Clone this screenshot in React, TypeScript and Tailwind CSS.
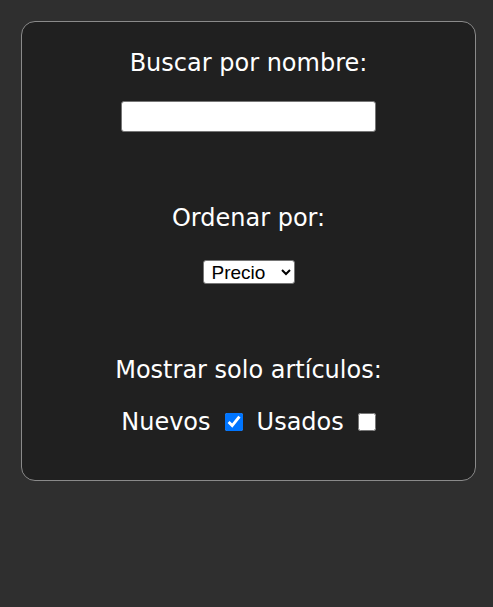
export default function App() {
  return (
    <div className="min-h-[607px] bg-[#2f2f2f] pt-[21px] pl-[21px] pr-[17px] font-['DejaVu_Sans',Verdana,sans-serif] text-white">
      <div className="flex flex-col items-center rounded-[14px] border border-[#8a8a8a] bg-[#202020] pt-[27px] pb-[44px]">
        <label className="text-[24px] leading-[28px]">Buscar por nombre:</label>
        <input
          type="text"
          className="mt-[24px] h-[31px] w-[255px] rounded-[3px] border border-[#767676] bg-white text-black"
        />

        <label className="mt-[72px] text-[24px] leading-[28px]">Ordenar por:</label>
        <select className="mt-[28px] h-[24px] w-[92px] rounded-[3px] border border-[#767676] bg-white pl-[4px] font-['Liberation_Sans',Arial,sans-serif] text-[19px] leading-[22px] text-black">
          <option>Precio</option>
        </select>

        <label className="mt-[72px] text-[24px] leading-[28px]">Mostrar solo artículos:</label>
        <div className="mt-[24px] flex h-[28px] items-center text-[24px]">
          <span>Nuevos</span>
          <input type="checkbox" defaultChecked className="ml-[14px] h-[18px] w-[18px]" />
          <span className="ml-[14px]">Usados</span>
          <input type="checkbox" className="ml-[14px] h-[18px] w-[18px]" />
        </div>
      </div>
    </div>
  )
}
